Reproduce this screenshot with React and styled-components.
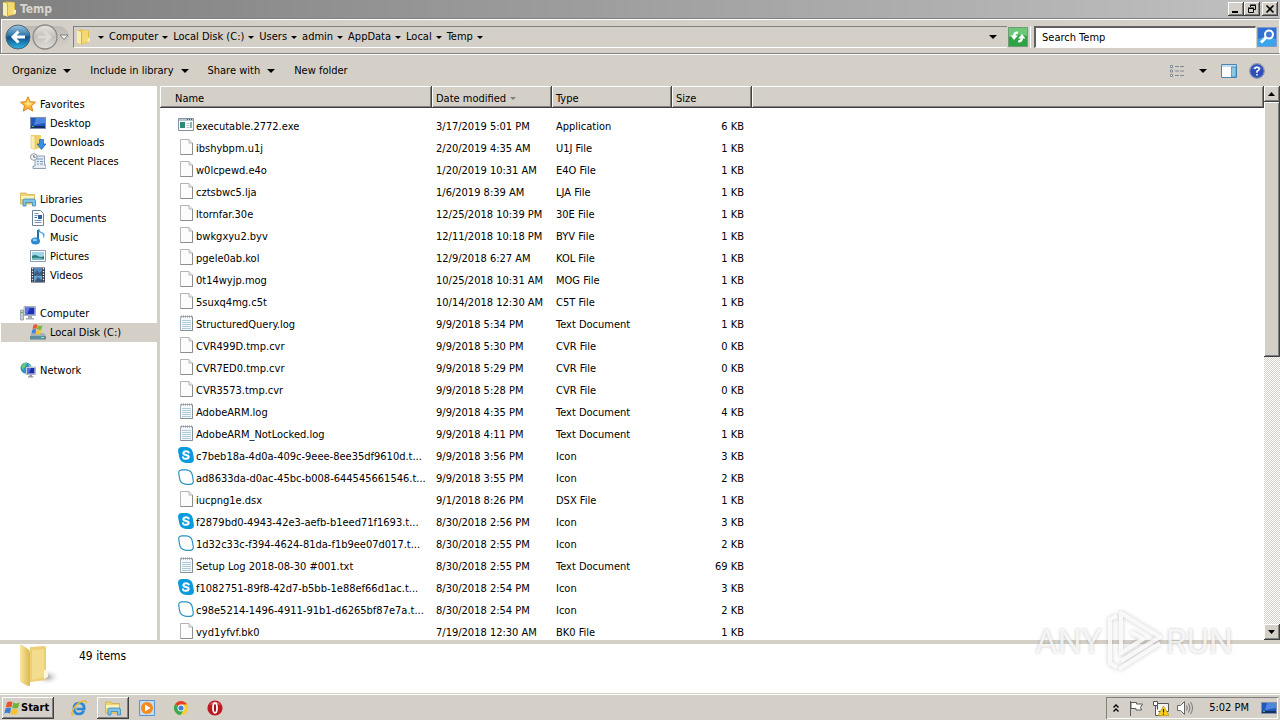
import React from "react"
import styled, { createGlobalStyle, css } from "styled-components"

const GlobalStyle = createGlobalStyle`
  * {
    box-sizing: border-box;
  }
  body {
    margin: 0;
    overflow: hidden;
    background: #d4d0c8;
  }
  body, button, input {
    font-family: "DejaVu Sans Condensed", "Noto Sans", sans-serif;
    font-size: 11px;
    line-height: 14px;
    color: #000;
  }
  button {
    border: 0;
    padding: 0;
    background: none;
  }
  a {
    color: inherit;
    text-decoration: none;
  }
  svg {
    display: block;
    flex: none;
  }
`

const raised = css`
  background: #d4d0c8;
  box-shadow: inset -1px -1px #404040, inset 1px 1px #fff, inset -2px -2px #808080;
`

const Screen = styled.div`
  position: relative;
  display: flex;
  flex-direction: column;
  height: 100vh;
  white-space: nowrap;
`

const TitleBar = styled.header`
  display: flex;
  align-items: center;
  height: 18px;
  padding: 0 2px 0 1px;
  gap: 3px;
  color: #d8d5ce;
  font-weight: bold;
  background: linear-gradient(90deg, #808080, #c0c0c0);
`

const TitleText = styled.h1`
  flex: 1;
  margin: 0;
  font-size: 12px;
`

const WindowButtons = styled.div`
  display: flex;
`

const WindowButton = styled.button`
  ${raised}
  display: flex;
  align-items: center;
  justify-content: center;
  width: 16px;
  height: 14px;
  margin-left: ${p => (p.$apart ? 2 : 0)}px;
`

const NavBar = styled.nav`
  display: flex;
  align-items: center;
  height: 36px;
  padding: 2px 2px 0 4px;
  border: 1px solid #808080;
  border-right-color: #fff;
  box-shadow: inset 1px 1px #fff, 0 1px #fff;
`

const RoundButtons = styled.div`
  display: flex;
  align-items: center;
  gap: 1px;
  margin-right: 4px;
  border-radius: 13px;
  background: linear-gradient(#bdbab4, #d4d0c8);
`

const AddressBox = styled.div`
  flex: 1;
  display: flex;
  align-items: center;
  height: 22px;
  padding-left: 1px;
  border: 1px solid #808080;
  border-width: 1px 0 1px 1px;
  border-bottom-color: #fff;
`

const Crumbs = styled.ol`
  flex: 1;
  display: flex;
  align-items: center;
  gap: 5px;
  margin: 0;
  padding: 0 0 0 7px;
  list-style: none;
`

const Crumb = styled.li`
  display: flex;
  align-items: center;
  gap: 4px;
`

const Arrow = styled.span`
  width: 0;
  height: 0;
  border: ${p => p.$size || 3}px solid transparent;
  border-top-color: ${p => p.$color || "#000"};
  border-bottom-width: 0;
`

const IconButton = styled.button`
  display: flex;
  align-items: center;
  justify-content: center;
  height: 22px;
  min-width: ${p => p.$width || 16}px;
`

const SearchBox = styled.div`
  display: flex;
  align-items: center;
  gap: 1px;
  margin-left: 2px;
  padding-left: 3px;
  border-left: 1px solid #fff;
`

const SearchInput = styled.input`
  width: 222px;
  height: 22px;
  padding: 0 6px;
  border: 1px solid #fff;
  border-top: 2px solid #606060;
  border-left: 2px solid #606060;
  outline: 0;
  background: #fff;
  &::placeholder {
    color: #000;
    opacity: 1;
  }
`

const Toolbar = styled.div`
  display: flex;
  align-items: center;
  height: 32px;
  padding: 1px 15px 0 12px;
  gap: 19px;
`

const ToolButton = styled.button`
  display: flex;
  align-items: center;
  gap: 7px;
  padding-top: 1px;
`

const ToolIcons = styled.div`
  display: flex;
  align-items: center;
  gap: 12px;
  margin-left: auto;
`

const Body = styled.div`
  flex: 1;
  display: flex;
  min-height: 0;
`

const Sidebar = styled.aside`
  flex: none;
  width: 160px;
  padding-top: 9px;
  background: #fff;
  border-right: 3px solid #d4d0c8;
`

const Group = styled.ul`
  margin: 0 0 19px;
  padding: 0;
  list-style: none;
`

const SideLink = styled.a`
  display: flex;
  gap: 4px;
  height: 19px;
  margin-left: 1px;
  padding-left: ${p => (p.$child ? 29 : 19)}px;
  line-height: 20px;
  background: ${p => (p.$active ? "#d4d0c8" : "none")};
  svg {
    margin-top: 1px;
  }
`

const ListPane = styled.main`
  flex: 1;
  min-width: 0;
  overflow: hidden;
  background: #fff;
`

const FileTable = styled.table`
  width: 100%;
  table-layout: fixed;
  border-collapse: separate;
  border-spacing: 0;
  tbody::before {
    content: "";
    display: block;
    height: 7px;
  }
`

const Col = styled.col`
  width: ${p => p.$width}px;
`

const HeadCell = styled.th`
  height: 22px;
  padding: 3px 0 0 ${p => (p.$first ? 15 : 4)}px;
  text-align: left;
  font-weight: normal;
  background: #d4d0c8;
  box-shadow: inset -1px -1px #404040, inset 1px 1px #fff, inset -2px -2px #808080;
`

const SortLabel = styled.span`
  display: flex;
  align-items: center;
  gap: 4px;
`

const Cell = styled.td`
  height: 22px;
  padding: 2px 0 0 4px;
`

const SizeCell = styled(Cell)`
  padding-right: 8px;
  text-align: right;
`

const FileName = styled.div`
  display: flex;
  gap: 2px;
  padding-left: 14px;
  line-height: 20px;
`

const ScrollBar = styled.div`
  flex: none;
  display: flex;
  flex-direction: column;
  width: 16px;
  background: repeating-conic-gradient(#d4d0c8 0 25%, #fff 0 50%) 0 0 / 2px 2px;
`

const ScrollButton = styled.button`
  ${raised}
  display: flex;
  align-items: center;
  justify-content: center;
  height: 16px;
`

const ScrollThumb = styled.div`
  ${raised}
  height: 46%;
  margin-bottom: auto;
`

const Details = styled.footer`
  display: flex;
  align-items: flex-start;
  gap: 19px;
  height: 53px;
  padding-left: 18px;
  border-top: 4px solid #d4d0c8;
  background: #fff;
  font-size: 12px;
`

const ItemCount = styled.p`
  margin: 5px 0 0;
`

const Taskbar = styled.div`
  display: flex;
  align-items: center;
  height: 27px;
  padding: 1px 2px 0;
  border-top: 1px solid #d4d0c8;
  box-shadow: inset 0 1px #fff;
`

const StartButton = styled.button`
  ${raised}
  display: flex;
  align-items: center;
  gap: 1px;
  height: 22px;
  padding: 0 5px 0 2px;
  font-weight: bold;
`

const Pinned = styled.div`
  flex: 1;
  display: flex;
  align-items: center;
  gap: 2px;
  padding-left: 9px;
`

const TaskButton = styled.button`
  display: flex;
  align-items: center;
  justify-content: center;
  width: 32px;
  height: 22px;
  ${p => p.$open && raised}
`

const Tray = styled.div`
  display: flex;
  align-items: center;
  gap: 8px;
  height: 22px;
  padding: 0 1px 0 5px;
  box-shadow: inset 1px 1px #808080, inset -1px -1px #fff;
`

const Clock = styled.time`
  padding: 0 4px 0 8px;
`

const Watermark = styled.div`
  position: absolute;
  right: 47px;
  bottom: 47px;
  display: flex;
  align-items: center;
  gap: 3px;
  font-family: Roboto, sans-serif;
  font-size: 34px;
  line-height: 64px;
  color: rgba(255, 255, 255, 0.8);
  text-shadow: 0 0 3px rgba(0, 0, 0, 0.25);
  pointer-events: none;
  svg {
    filter: drop-shadow(0 0 2px rgba(0, 0, 0, 0.25));
  }
`

const Svg = ({ size = 16, box = 16, children }) => (
  <svg width={size} height={size} viewBox={`0 0 ${box} ${box}`} aria-hidden="true">
    {children}
  </svg>
)

const icons = {
  folder: (
    <>
      <path d="M2 1.500 6 .5l8 1v12l-8 2-4-1z" fill="#e0bb48" />
      <path d="M7 1.500h6v11.500l-6 1.500z" fill="#f3d975" />
      <path d="M2 1.500 7 3v12.500L2 14z" fill="#fbeeac" />
      <path d="M6.500 3v12.500" stroke="#c99f34" strokeWidth=".8" />
      <path d="M12.500 8.500v5l2.500-1V9z" fill="#f8ecb4" />
    </>
  ),
  star: (
    <>
      <path d="m8 .8 2.200 4.900 5.300.5-4 3.600 1.200 5.300L8 12.300l-4.700 2.800 1.200-5.300-4-3.600 5.300-.5z" fill="#fdb53c" stroke="#de8418" />
      <path d="m8 3 1.500 3.700 3.500.3-2.500 2L8 10 4 7l2.500-.3z" fill="#ffe07c" />
    </>
  ),
  desktop: (
    <>
      <path d="M0 2h16v12H0z" fill="#8292ac" />
      <path d="M1 3h14v10H1z" fill="#2257bc" />
      <path d="M6 3h9v5L4 10z" fill="#4e86de" />
      <path d="M1 11h14v2H1z" fill="#152f62" />
      <path d="M2 11h2v1H2z" fill="#5cb868" />
    </>
  ),
  downloads: (
    <>
      <path d="M1 1h10v13l-5 1-5-1z" fill="#ecd06c" />
      <path d="M1 1l4 1.500v13L1 14z" fill="#fbeeb0" stroke="#d9b84e" strokeWidth=".5" />
      <path d="M9.500 5.500h4V10H16l-4.500 5.500L7 10h2.500z" fill="#3c8fdc" stroke="#1c62ac" strokeWidth=".7" />
    </>
  ),
  recent: (
    <>
      <path d="M5 3h9.500v9H16v3.500H3V13h2z" fill="#e6edf3" stroke="#8296a8" strokeWidth=".9" />
      <path d="M7 6h6M7 8.500h2m1 0h3M7 11h2m1 0h3" stroke="#6e94b8" />
      <circle cx="3.800" cy="4" r="3.300" fill="#f4f7fa" stroke="#8a9aaa" />
      <path d="M3.800 2v2.300h1.700" stroke="#445" fill="none" strokeWidth=".8" />
    </>
  ),
  libraries: (
    <>
      <path d="M.5 3.500V2H6l1 1.500h7.500V13H.5z" fill="#efd470" stroke="#c9a742" strokeWidth=".7" />
      <path d="M1 5h13v3H1z" fill="#fdf3bd" />
      <path d="M3 15V9.500Q3 8 4.500 8h9Q15.500 8 15.500 9.500V15h-3v-3.500H6V15z" fill="#7cc3e8" stroke="#3c86b4" strokeWidth=".8" />
    </>
  ),
  document: (
    <>
      <path d="M2.500.5h8l3 3v12h-11z" fill="#fff" stroke="#6e8296" />
      <path d="M4.500 3.500h4M4.500 5.500h3M4.500 10.500h7M4.500 12.500h7" stroke="#7894ba" />
      <path d="M8 5h4v4H8z" fill="#31609c" />
      <path d="M4.500 7.500h2.500" stroke="#31609c" />
    </>
  ),
  music: (
    <>
      <path d="M8 1v10.500" stroke="#1d70b8" strokeWidth="2" />
      <path d="M8 0q0 3 3 4t2 5q1 0 1.500-2.500T11 3Q9.500 2 9.500 0z" fill="#3f9edc" />
      <ellipse cx="5.500" cy="12" rx="4.500" ry="3.500" fill="#2b89d0" />
      <ellipse cx="4.800" cy="11" rx="2.200" ry="1.300" fill="#93d0f2" />
    </>
  ),
  pictures: (
    <>
      <path d="M.5 2.500h15v11H.5z" fill="#fff" stroke="#8c9cac" />
      <path d="M2 4h12v8H2z" fill="#9ed4ea" />
      <path d="M2 8q3-2 6 0t6 0v4H2z" fill="#2f7d76" />
      <path d="M2 10q6-1 12 1v1H2z" fill="#6fbac4" />
    </>
  ),
  videos: (
    <>
      <path d="M1 .5h14v15H1z" fill="#2d3440" />
      <path d="M4 1h8v6.500H4z" fill="#4c8ac6" />
      <path d="M4 8.500h8V15H4z" fill="#63a4cf" />
      <path d="m4 7 3-4 2 3 3-2v3.500H4zM5 14l3-4 4 3v2H5z" fill="#3b5d82" />
      <path d="M2.500 1v14M13.500 1v14" stroke="#e6eaf0" strokeWidth="1.400" strokeDasharray="1.500 1.200" />
    </>
  ),
  computer: (
    <>
      <path d="M.5 5h3v10h-3z" fill="#c4ccd0" stroke="#84909a" strokeWidth=".7" />
      <path d="M1 7h2v1H1z" fill="#57b757" />
      <path d="M4 1.500h11.500v9H4z" fill="#dfe3ea" stroke="#8c94a8" strokeWidth=".7" />
      <path d="M5 2.500h9.500v7H5z" fill="#1e2fb0" />
      <path d="M5 2.500h5L7 9.500H5z" fill="#5a74e6" />
      <path d="M8 11h4v2h2v1.500H6V13h2z" fill="#a3abb6" />
    </>
  ),
  disk: (
    <>
      <path d="M2 9h12l2 3v3.500H0V12z" fill="#9fb2ba" />
      <path d="M0 12h16v3.500H0z" fill="#5f8f9e" />
      <path d="M11 13.500h3" stroke="#8ff08a" />
      <path d="M3.500 1q2-1.500 4 0l-1 4q-2-1.200-4 0z" fill="#ea5a26" />
      <path d="M8 1.300q2 1.300 4.500 0l-1 4q-2 1.200-4.500 0z" fill="#79b83a" />
      <path d="M2.300 5.700q2-1.200 4 0l-1 4q-2-1.200-4 0z" fill="#3f83d8" />
      <path d="M6.800 6q2 1.200 4.500 0l-1 4q-2 1.200-4.500 0z" fill="#f8c22c" />
    </>
  ),
  network: (
    <>
      <circle cx="6" cy="6" r="5.500" fill="#2d8fc8" />
      <path d="M1 4q3-4 6-3L5 5 3 8z" fill="#6cc870" />
      <path d="M8 2l3 2-1 2z" fill="#a9e09a" />
      <path d="M6 5h9.500v7.500H6z" fill="#dfe3ea" stroke="#8c94a8" strokeWidth=".6" />
      <path d="M7 6h7.500v5.500H7z" fill="#1c2dac" />
      <path d="M7 6h4l-2 5.500H7z" fill="#5470e4" />
      <path d="M9.500 13h2.500v1.200h1.500v1.300H8v-1.300h1.500z" fill="#8c98a8" />
    </>
  ),
  exe: (
    <>
      <path d="M.5 1.500h15v12H.5z" fill="#fff" stroke="#8292a2" />
      <path d="M1 2h14v2H1z" fill="#b8c6d4" />
      <path d="M9 2.500h5" stroke="#4c5c6c" strokeDasharray="1 1" />
      <path d="M2 5h5v6H2z" fill="#2d8a74" />
      <path d="M8.500 6.500h3M8.500 8.500h3M8.500 10.500h3" stroke="#b4c4d0" />
      <path d="M13 5v6" stroke="#5d9c8c" strokeWidth="1.500" />
    </>
  ),
  file: (
    <>
      <path d="M2.500.5h8.500l3.500 3.500v11.500h-12z" fill="#fcfcfc" stroke="#b4b4b4" />
      <path d="M14.500 4v11.500h-12" fill="none" stroke="#8c8c8c" />
      <path d="M11 .5V4h3.500" fill="#eee" stroke="#b4b4b4" />
    </>
  ),
  text: (
    <>
      <path d="M2.500 1.500h12v14h-12z" fill="#f4f8fa" stroke="#a4aeb4" />
      <path d="M14.500 2v13.500h-12" fill="none" stroke="#848e94" />
      <path d="M4 5.500h9M4 7.500h9M4 9.500h9M4 11.500h9M4 13.500h9" stroke="#b0cbda" />
      <path d="M3 1.500h11" stroke="#8d979d" strokeWidth="2" strokeDasharray="1 1" />
    </>
  ),
  skype: (
    <>
      <path d="M4 0h5q5.500.8 6 6.500l1 5.500q0 4-4 4H8Q1.500 15 1 9L0 4q0-4 4-4z" fill="#0a9bdf" />
      <path d="M10.800 5.500Q10 4.200 8 4.200T5.300 6q0 1.500 2.700 2t2.700 2-2.700 1.800-3-1.500" fill="none" stroke="#fff" strokeWidth="2" strokeLinecap="round" />
    </>
  ),
  blob: (
    <path d="M4 .8h4.500Q14 1.500 14.500 7l.8 5q0 3.300-3.300 3.300H8Q2 14.500 1.500 9L.7 4Q.7.800 4 .8z" fill="#fff" stroke="#2b93c4" strokeWidth="1.200" />
  ),
  flag: (
    <>
      <path d="M1.500 1v15M2 2.500h5.500v1.500h6L11.500 7.500l1 2.500H7V8.500H2z" fill="#fff" stroke="#5c5c5c" />
    </>
  ),
  netWarning: (
    <>
      <path d="M4.500 3.500h11v8h-11z" fill="#f4f4f4" stroke="#555" />
      <path d="M.5 1.500h4v4h-4zM2.500 6v9.500h5" fill="#fff" stroke="#555" />
      <path d="m10.500 6 5.500 9.500H5z" fill="#fbd21c" stroke="#b89200" strokeWidth=".7" />
      <path d="M10.500 9v3.500m0 1v1.200" stroke="#222" strokeWidth="1.200" />
    </>
  ),
  volume: (
    <>
      <path d="M.5 5.500h3l4-4v13l-4-4h-3z" fill="#fff" stroke="#666" />
      <path d="M9.500 5.500q1.500 2.500 0 5M11.500 3.500q3 4.500 0 9M13.500 2q4 6 0 12" fill="none" stroke="#777" />
    </>
  ),
  windows: (
    <>
      <path d="M3 2.500q3-2 5.500-.3L7.300 7.500Q5 6 1.800 7.600z" fill="#e8542a" />
      <path d="M9.300 2.600q2.700 1.600 6.200 0l-1.300 5q-3.200 1.700-6.100.2z" fill="#6fb43c" />
      <path d="M1.600 8.500q3-1.700 5.500-.2l-1.200 5.200Q3.500 12 .3 13.500z" fill="#3b7fd4" />
      <path d="M7.800 8.700q2.700 1.600 6.200 0l-1.200 5q-3.200 1.800-6.200.2z" fill="#f7c02c" />
    </>
  ),
  ie: (
    <>
      <path d="M12.700 10.800Q11.500 14 8 14q-5 0-5-5.500T8 3q5.500 0 5.200 6H5.500" fill="none" stroke="#2b87d8" strokeWidth="2.700" />
      <path d="M2.500 15Q-.5 15 2 10q3-6 9-8.700 5-2 4 2" fill="none" stroke="#e9b832" strokeWidth="1.500" />
    </>
  ),
  player: (
    <>
      <path d="M.5.5h15v15H.5z" fill="#c4dcf4" stroke="#5d93cc" />
      <circle cx="8" cy="8" r="6" fill="#f48a1c" />
      <path d="m6 4.500 5.500 3.500L6 11.500z" fill="#fff" />
    </>
  ),
  chrome: (
    <>
      <circle cx="8" cy="8" r="7" fill="#f8cf2e" />
      <path d="M8 8 1.900 4.500a7 7 0 0 1 12.200 0z" fill="#e2402f" />
      <path d="M8 8 1.900 4.500A7 7 0 0 0 7.500 15L11 9.700z" fill="#37a852" />
      <path d="M8 4.500h6a7 7 0 0 1 1 3.500H11z" fill="#f8cf2e" />
      <circle cx="8" cy="8" r="3.500" fill="#fff" />
      <circle cx="8" cy="8" r="2.600" fill="#3f7de0" />
    </>
  ),
  opera: (
    <>
      <circle cx="8" cy="8" r="7.600" fill="#c01820" />
      <path d="M2 5q6-7 12 0-6-2-12 0z" fill="#e4646a" />
      <ellipse cx="8" cy="8" rx="2" ry="4.800" fill="#a01018" stroke="#fff" strokeWidth="1.800" />
    </>
  ),
  views: (
    <>
      <path d="M1.500 2.500h2v2h-2zM1.500 7h2v2h-2zM1.500 11.500h2v2h-2z" fill="#fff" stroke="#6d7c8a" strokeWidth=".9" />
      <path d="M6 3.500h4m1 0h4M6 8h4m1 0h4M6 12.500h4m1 0h4" stroke="#7d8b98" />
    </>
  ),
  pane: (
    <>
      <path d="M.5 1.500h15v13H.5z" fill="#fff" stroke="#4687b4" />
      <path d="M1 2h14v2H1z" fill="#c4dcec" />
      <path d="M10.500 4h4.500v10h-4.500z" fill="#8cc8e4" stroke="#3b7fae" strokeWidth=".7" />
    </>
  ),
  help: (
    <>
      <circle cx="8" cy="8" r="7.300" fill="#2c50b8" stroke="#8c98b0" strokeWidth="1.200" />
      <path d="M3 6q5-6 10 0-5-1.500-10 0z" fill="#7f9ee6" />
      <path d="M5.800 6.200Q6 4.200 8 4.200t2.300 1.900Q10.300 7.300 8 8.300v1.400m0 1.300v1.500" fill="none" stroke="#fff" strokeWidth="1.600" />
    </>
  ),
}

const Icon = ({ name, size }) => <Svg size={size}>{icons[name]}</Svg>

const groups = [
  [
    ["Favorites", "star"],
    ["Desktop", "desktop"],
    ["Downloads", "downloads"],
    ["Recent Places", "recent"],
  ],
  [
    ["Libraries", "libraries"],
    ["Documents", "document"],
    ["Music", "music"],
    ["Pictures", "pictures"],
    ["Videos", "videos"],
  ],
  [
    ["Computer", "computer"],
    ["Local Disk (C:)", "disk"],
  ],
  [["Network", "network"]],
]

const crumbs = ["Computer", "Local Disk (C:)", "Users", "admin", "AppData", "Local", "Temp"]

const files = [
  ["executable.2772.exe", "3/17/2019 5:01 PM", "Application", 6, "exe"],
  ["ibshybpm.u1j", "2/20/2019 4:35 AM", "U1J File", 1, "file"],
  ["w0lcpewd.e4o", "1/20/2019 10:31 AM", "E4O File", 1, "file"],
  ["cztsbwc5.lja", "1/6/2019 8:39 AM", "LJA File", 1, "file"],
  ["ltornfar.30e", "12/25/2018 10:39 PM", "30E File", 1, "file"],
  ["bwkgxyu2.byv", "12/11/2018 10:18 PM", "BYV File", 1, "file"],
  ["pgele0ab.kol", "12/9/2018 6:27 AM", "KOL File", 1, "file"],
  ["0t14wyjp.mog", "10/25/2018 10:31 AM", "MOG File", 1, "file"],
  ["5suxq4mg.c5t", "10/14/2018 12:30 AM", "C5T File", 1, "file"],
  ["StructuredQuery.log", "9/9/2018 5:34 PM", "Text Document", 1, "text"],
  ["CVR499D.tmp.cvr", "9/9/2018 5:30 PM", "CVR File", 0, "file"],
  ["CVR7ED0.tmp.cvr", "9/9/2018 5:29 PM", "CVR File", 0, "file"],
  ["CVR3573.tmp.cvr", "9/9/2018 5:28 PM", "CVR File", 0, "file"],
  ["AdobeARM.log", "9/9/2018 4:35 PM", "Text Document", 4, "text"],
  ["AdobeARM_NotLocked.log", "9/9/2018 4:11 PM", "Text Document", 1, "text"],
  ["c7beb18a-4d0a-409c-9eee-8ee35df9610d.t...", "9/9/2018 3:56 PM", "Icon", 3, "skype"],
  ["ad8633da-d0ac-45bc-b008-644545661546.t...", "9/9/2018 3:55 PM", "Icon", 2, "blob"],
  ["iucpng1e.dsx", "9/1/2018 8:26 PM", "DSX File", 1, "file"],
  ["f2879bd0-4943-42e3-aefb-b1eed71f1693.t...", "8/30/2018 2:56 PM", "Icon", 3, "skype"],
  ["1d32c33c-f394-4624-81da-f1b9ee07d017.t...", "8/30/2018 2:55 PM", "Icon", 2, "blob"],
  ["Setup Log 2018-08-30 #001.txt", "8/30/2018 2:55 PM", "Text Document", 69, "text"],
  ["f1082751-89f8-42d7-b5bb-1e88ef66d1ac.t...", "8/30/2018 2:54 PM", "Icon", 3, "skype"],
  ["c98e5214-1496-4911-91b1-d6265bf87e7a.t...", "8/30/2018 2:54 PM", "Icon", 2, "blob"],
  ["vyd1yfvf.bk0", "7/19/2018 12:30 AM", "BK0 File", 1, "file"],
]

const Title = () => (
  <TitleBar>
    <Icon name="folder" />
    <TitleText>Temp</TitleText>
    <WindowButtons>
      <WindowButton aria-label="Minimize">
        <Svg size={10} box={10}><path d="M1 7h6v2H1z" /></Svg>
      </WindowButton>
      <WindowButton aria-label="Restore">
        <Svg size={10} box={10}>
          <path d="M3.500 3V1.500h5v4H7M3 1h6M1.500 4.500h5v4h-5zM1 4h6" fill="none" stroke="#000" />
        </Svg>
      </WindowButton>
      <WindowButton aria-label="Close" $apart>
        <Svg size={10} box={10}><path d="m1.500 1.500 7 7m0-7-7 7" stroke="#000" strokeWidth="1.600" /></Svg>
      </WindowButton>
    </WindowButtons>
  </TitleBar>
)

const Navigation = () => (
  <NavBar>
    <RoundButtons>
      <IconButton aria-label="Back">
        <Svg size={26} box={26}>
          <defs>
            <linearGradient id="back" x2="0" y2="1">
              <stop offset="0" stopColor="#9cc4dc" />
              <stop offset=".45" stopColor="#2a76ac" />
              <stop offset=".5" stopColor="#0c4f8c" />
              <stop offset="1" stopColor="#2fb4e4" />
            </linearGradient>
          </defs>
          <circle cx="13" cy="13" r="12" fill="url(#back)" stroke="#4d6474" />
          <path d="M20 13H8m5.500-5.500L8 13l5.500 5.500" fill="none" stroke="#fff" strokeWidth="3" />
        </Svg>
      </IconButton>
      <IconButton aria-label="Forward">
        <Svg size={26} box={26}>
          <defs>
            <linearGradient id="forward" x2="0" y2="1">
              <stop offset="0" stopColor="#e6e4e0" />
              <stop offset=".5" stopColor="#c2bfba" />
              <stop offset="1" stopColor="#e2e0dc" />
            </linearGradient>
          </defs>
          <circle cx="13" cy="13" r="12" fill="url(#forward)" stroke="#8c8a86" strokeWidth="1.300" />
          <path d="M6 13h12m-5.500-5.500L18 13l-5.500 5.500" fill="none" stroke="#dcdad6" strokeWidth="3" />
        </Svg>
      </IconButton>
      <IconButton aria-label="Recent pages" $width={10}>
        <Svg size={10} box={10}><path d="M1 3h8L5 7.500z" fill="#f4f2ee" stroke="#807e7a" /></Svg>
      </IconButton>
    </RoundButtons>
    <AddressBox>
      <Icon name="folder" />
      <Crumbs>
        <Arrow />
        {crumbs.map(name => (
          <Crumb key={name}>
            <a href="#">{name}</a>
            <Arrow />
          </Crumb>
        ))}
      </Crumbs>
      <IconButton aria-label="Previous locations" $width={28}>
        <Arrow $size={4} />
      </IconButton>
    </AddressBox>
    <IconButton aria-label="Refresh" $width={21}>
      <Svg size={20} box={20}>
        <path d="M.5.5h19v19H.5z" fill="#2fa344" stroke="#6f9c78" />
        <path d="M1 1h18v8Q10 6 1 10z" fill="#6cc878" />
        <path d="M10 4.500Q5.500 4 5 8.500H2.500L6 13l4-4.500H7.500Q7.500 6.500 10 6.500zM10 15.500q4.500.500 5-4h2.500L14 7l-4 4.500h2.500q0 2-2.500 2z" fill="#fff" />
      </Svg>
    </IconButton>
    <SearchBox>
      <SearchInput aria-label="Search" placeholder="Search Temp" />
      <IconButton aria-label="Start search" $width={20}>
        <Svg size={20} box={20}>
          <path d="M.5.5h19v19H.5z" fill="#2f6fd0" stroke="#7c9ccc" />
          <path d="M1 12q9-4 18 0v7H1z" fill="#3aa4ec" />
          <circle cx="12" cy="7.500" r="4" fill="#3f78d8" stroke="#fff" strokeWidth="2" />
          <path d="m9 10.500-5 5" stroke="#fff" strokeWidth="3" />
        </Svg>
      </IconButton>
    </SearchBox>
  </NavBar>
)

const Tools = () => (
  <Toolbar>
    {["Organize", "Include in library", "Share with"].map(label => (
      <ToolButton key={label}>
        {label}
        <Arrow $size={4} />
      </ToolButton>
    ))}
    <ToolButton>New folder</ToolButton>
    <ToolIcons>
      <IconButton aria-label="Change view"><Icon name="views" /></IconButton>
      <IconButton aria-label="More views" $width={12}><Arrow $size={4} /></IconButton>
      <IconButton aria-label="Preview pane"><Icon name="pane" /></IconButton>
      <IconButton aria-label="Help"><Icon name="help" /></IconButton>
    </ToolIcons>
  </Toolbar>
)

const Files = () => (
  <FileTable>
    <colgroup>
      <Col $width={272} />
      <Col $width={120} />
      <Col $width={120} />
      <Col $width={80} />
      <col />
    </colgroup>
    <thead>
      <tr>
        <HeadCell $first>Name</HeadCell>
        <HeadCell>
          <SortLabel>Date modified <Arrow $color="#808080" /></SortLabel>
        </HeadCell>
        <HeadCell>Type</HeadCell>
        <HeadCell>Size</HeadCell>
        <HeadCell as="td" />
      </tr>
    </thead>
    <tbody>
      {files.map(([name, date, type, size, icon]) => (
        <tr key={name}>
          <Cell>
            <FileName>
              <Icon name={icon} />
              {name}
            </FileName>
          </Cell>
          <Cell>{date}</Cell>
          <Cell>{type}</Cell>
          <SizeCell>{size} KB</SizeCell>
          <Cell />
        </tr>
      ))}
    </tbody>
  </FileTable>
)

const BigFolder = () => (
  <svg width="42" height="44" viewBox="0 0 42 44" aria-hidden="true">
    <defs>
      <linearGradient id="flap" x2="1" y2="0">
        <stop offset="0" stopColor="#f8e6a0" />
        <stop offset="1" stopColor="#dcb850" />
      </linearGradient>
      <radialGradient id="shade">
        <stop offset="0" stopColor="#9a9a9a" />
        <stop offset="1" stopColor="#fff" stopOpacity="0" />
      </radialGradient>
    </defs>
    <ellipse cx="29" cy="33" rx="13" ry="8" fill="url(#shade)" />
    <path d="M12 3l14-1q2 0 2 2v32l-16 2z" fill="#ecce74" />
    <path d="M14 6l12-1v28l-12 3z" fill="#f3dc8e" />
    <path d="M2 2q0-2 2-1l6 4q2 1 2 4v31q0 3-2 2l-6-3q-2-1-2-3z" fill="url(#flap)" />
    <path d="M26 26q4-1 4 3v4l-4 2z" fill="#fdf6d8" />
  </svg>
)

const TaskbarRow = () => (
  <Taskbar>
    <StartButton><Icon name="windows" />Start</StartButton>
    <Pinned>
      <TaskButton aria-label="Internet Explorer"><Icon name="ie" /></TaskButton>
      <TaskButton aria-label="Windows Explorer" $open><Icon name="libraries" /></TaskButton>
      <TaskButton aria-label="Media Player"><Icon name="player" /></TaskButton>
      <TaskButton aria-label="Chrome"><Icon name="chrome" /></TaskButton>
      <TaskButton aria-label="Opera"><Icon name="opera" /></TaskButton>
    </Pinned>
    <Tray>
      <IconButton aria-label="Show hidden icons" $width={10}>
        <Svg size={10} box={10}><path d="m2.500 4.500 2.500-2.500 2.500 2.500M2.500 8.500l2.500-2.500 2.500 2.500" fill="none" stroke="#000" strokeWidth="1.400" /></Svg>
      </IconButton>
      <Icon name="flag" />
      <Icon name="netWarning" />
      <Icon name="volume" />
      <Clock>5:02 PM</Clock>
      <Icon name="desktop" />
    </Tray>
  </Taskbar>
)

const App = () => (
  <>
    <GlobalStyle />
    <Screen>
      <Title />
      <Navigation />
      <Tools />
      <Body>
        <Sidebar>
          {groups.map(items => (
            <Group key={items[0][0]}>
              {items.map(([label, icon], i) => (
                <li key={label}>
                  <SideLink href="#" $child={i > 0} $active={icon === "disk"}>
                    <Icon name={icon} />
                    {label}
                  </SideLink>
                </li>
              ))}
            </Group>
          ))}
        </Sidebar>
        <ListPane><Files /></ListPane>
        <ScrollBar>
          <ScrollButton aria-label="Scroll up">
            <Svg size={8} box={8}><path d="M0 6h7L3.500 2z" /></Svg>
          </ScrollButton>
          <ScrollThumb />
          <ScrollButton aria-label="Scroll down">
            <Svg size={8} box={8}><path d="M0 2h7L3.500 6z" /></Svg>
          </ScrollButton>
        </ScrollBar>
      </Body>
      <Details>
        <BigFolder />
        <ItemCount>49 items</ItemCount>
      </Details>
      <TaskbarRow />
      <Watermark>
        ANY
        <svg width="58" height="64" viewBox="0 0 58 64" aria-hidden="true">
          <g fill="none" stroke="#fff" strokeOpacity=".8" strokeWidth="4" strokeLinejoin="round">
            <path d="M12 7 5 10v44l7 5" />
            <path d="M16 46V4l39 24-39 24M26 23l12 7-22 14" />
            <path d="M55 34 14 60" />
          </g>
        </svg>
        RUN
      </Watermark>
    </Screen>
  </>
)

export default App
